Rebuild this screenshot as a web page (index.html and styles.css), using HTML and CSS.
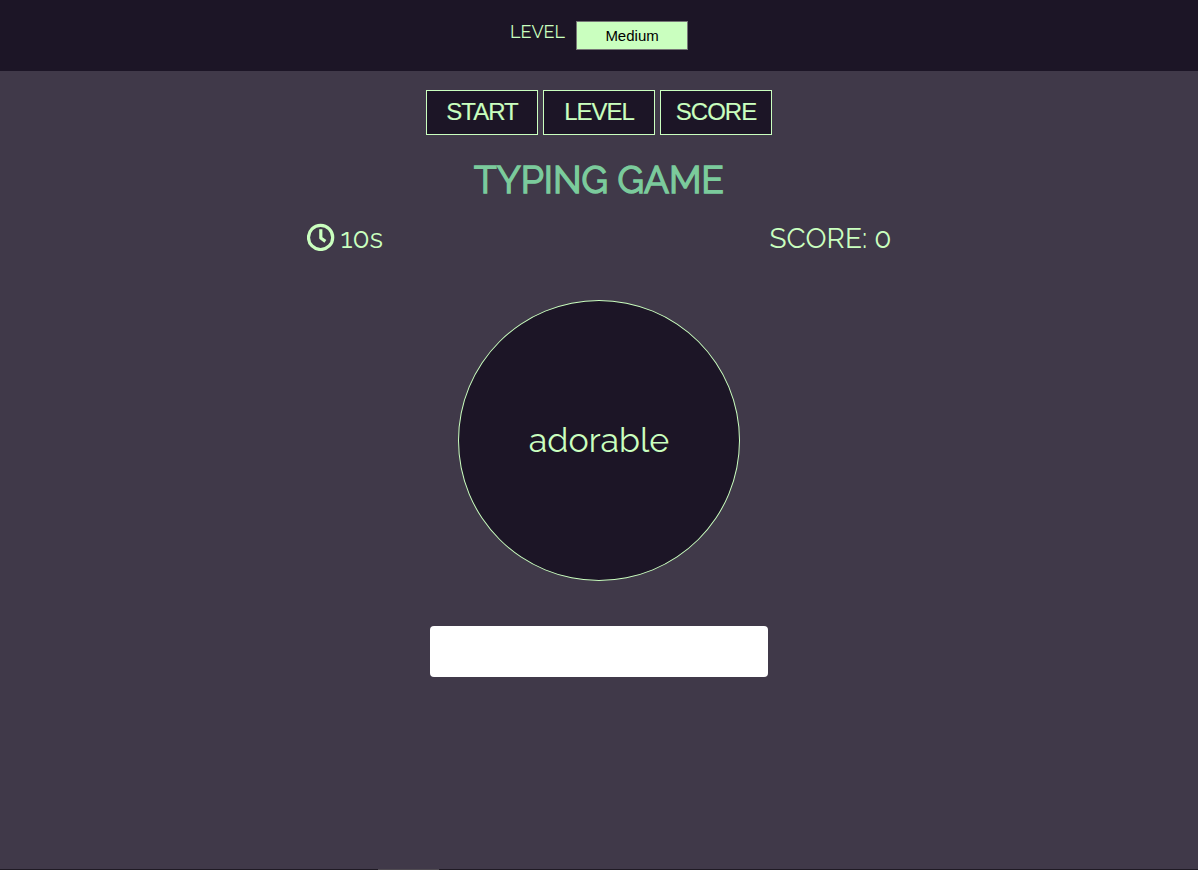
FILE: index.html
```html
<!DOCTYPE html>
<html lang="en">
<head>
  <meta charset="UTF-8" />
  <meta name="viewport" content="width=device-width, initial-scale=1.0"/>
  <title>Typing Game</title>
  <link rel="stylesheet" href="styles.css">
</head>

<body>
  <header class="settings">
    <label class="settings-label" for="difficulty">LEVEL</label>
    <select class="difficulty" id="difficulty">
      <option>Easy</option>
      <option selected>Medium</option>
      <option>Hard</option>
    </select>
  </header>

  <main class="game">
    <div class="buttons">
      <button class="btn">START</button>
      <button class="btn">LEVEL</button>
      <button class="btn">SCORE</button>
    </div>

    <h1 class="title">TYPING GAME</h1>

    <div class="stats">
      <div class="time">
        <svg class="clock" viewBox="0 0 28 28" fill="none" stroke="currentColor">
          <circle cx="13.600" cy="14.400" r="12.100" stroke-width="3.200"/>
          <path d="M13.800 6.200v8.800l4.600 3.400" stroke-width="3.200" stroke-linecap="butt" stroke-linejoin="round"/>
        </svg>
        <span class="time-text">10s</span>
      </div>
      <div class="score">SCORE: 0</div>
    </div>

    <div class="circle">
      <span class="word">adorable</span>
    </div>

    <input type="text" class="word-input" autocomplete="off" />
  </main>

  <footer class="bottom-line"><div class="bottom-mark"></div></footer>
</body>
</html>
```

FILE: styles.css
```css
:root {
  --dark: #1c1526;
  --background: #403949;
  --light: #caffbf;
  --title: #7bcb9c;
  --font: Raleway, Lato, sans-serif;
}

* {
  box-sizing: border-box;
}

body {
  margin: 0;
  height: 100vh;
  overflow: hidden;
  display: flex;
  flex-direction: column;
  font-family: var(--font);
  background-color: var(--background);
  color: var(--light);
}

.settings {
  height: 71px;
  padding-top: 21px;
  display: flex;
  justify-content: center;
  align-items: flex-start;
  gap: 11px;
  background-color: var(--dark);
}

.settings-label {
  font-size: 18px;
  line-height: 22px;
}

.difficulty {
  appearance: none;
  width: 112px;
  height: 29px;
  padding: 0;
  border: 1px solid #767676;
  border-radius: 0;
  background-color: var(--light);
  color: #000;
  font-family: "Liberation Sans", Arial, sans-serif;
  font-size: 15px;
  text-align: center;
  text-align-last: center;
}

.game {
  flex: 1;
  padding-top: 19px;
  display: flex;
  flex-direction: column;
  align-items: center;
}

.buttons {
  display: flex;
  gap: 5px;
}

.btn {
  width: 112px;
  height: 45px;
  padding: 0 0 1px;
  border: 1px solid var(--light);
  background-color: var(--dark);
  color: var(--light);
  font-family: "Liberation Sans", Arial, sans-serif;
  font-size: 24px;
  letter-spacing: -1px;
  -webkit-text-stroke: 0.15px var(--light);
  cursor: pointer;
}

.title {
  margin: 21px 0 0;
  font-size: 37px;
  line-height: 48px;
  font-weight: 400;
  -webkit-text-stroke: 1.4px var(--title);
  color: var(--title);
}

.stats {
  width: 585px;
  height: 28px;
  margin-top: 19px;
  display: flex;
  justify-content: space-between;
  font-size: 28px;
  line-height: 32px;
}

.time {
  display: flex;
  gap: 6px;
}

.clock {
  width: 28px;
  height: 28px;
}

.circle {
  width: 282px;
  height: 281px;
  margin-top: 49px;
  padding-bottom: 2px;
  display: flex;
  justify-content: center;
  align-items: center;
  border: 1px solid var(--light);
  border-radius: 50%;
  background-color: var(--dark);
}

.word {
  font-size: 34px;
}

.word-input {
  width: 338px;
  height: 51px;
  margin-top: 45px;
  padding: 0 12px;
  border: none;
  border-radius: 4px;
  background-color: #fff;
  font-size: 24px;
  text-align: center;
}

.bottom-line {
  height: 1px;
  padding-left: 378px;
  background-color: #1f1a24;
}

.bottom-mark {
  width: 61px;
  height: 1px;
  background-color: #504b52;
}
```
